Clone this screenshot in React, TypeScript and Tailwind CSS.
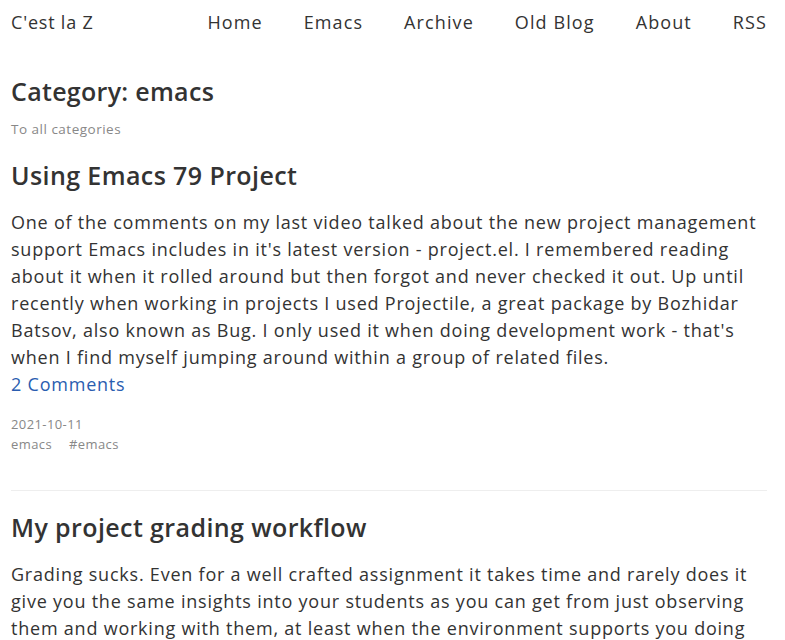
const posts = [
  {
    title: 'Using Emacs 79 Project',
    body: "One of the comments on my last video talked about the new project management support Emacs includes in it's latest version - project.el. I remembered reading about it when it rolled around but then forgot and never checked it out. Up until recently when working in projects I used Projectile, a great package by Bozhidar Batsov, also known as Bug. I only used it when doing development work - that's when I find myself jumping around within a group of related files.",
    comments: '2 Comments',
    date: '2021-10-11',
    tags: ['emacs', '#emacs'],
  },
  {
    title: 'My project grading workflow',
    body: 'Grading sucks. Even for a well crafted assignment it takes time and rarely does it give you the same insights into your students as you can get from just observing them and working with them, at least when the environment supports you doing that. Reviewing projects is a good place to start.',
    comments: '',
    date: '',
    tags: [],
  },
];

const navLinks = ['Home', 'Emacs', 'Archive', 'Old Blog', 'About', 'RSS'];

export default function App() {
  return (
    <div
      className="min-h-screen bg-white text-[#333333] pl-[11px] pr-[18px]"
      style={{ fontFamily: '"Open Sans", "Liberation Sans", sans-serif' }}
    >
      <header className="flex items-center justify-between h-[45px] text-[18px] tracking-[1.1px]">
        <a className="text-[#333333] tracking-[0.8px]">C'est la Z</a>
        <nav className="flex gap-[41px]">
          {navLinks.map((l) => (
            <a key={l} className="text-[#333333]">
              {l}
            </a>
          ))}
        </nav>
      </header>

      <main>
        <h1 className="text-[25px] font-semibold mt-[29px] leading-[34px] tracking-[0.3px]">Category: emacs</h1>
        <p className="text-[13.5px] text-[#888888] mt-[11px] tracking-[0.5px]">To all categories</p>

        {posts.map((p, i) => (
          <article key={p.title} className={i > 0 ? 'pt-[19px]' : 'pt-[19px]'}>
            <h2 className="text-[25px] font-semibold leading-[34px] tracking-[0.4px]">{p.title}</h2>
            <p className="text-[18px] leading-[27px] mt-[17px] tracking-[0.78px]">{p.body}</p>
            {p.comments && (
              <a className="block text-[18px] leading-[27px] text-[#2a5db0] tracking-[0.78px]">{p.comments}</a>
            )}
            {p.date && (
              <div className="mt-[16px] text-[13px] leading-[20px] text-[#888888] tracking-[0.4px]">
                <div>{p.date}</div>
                <div className="flex gap-[17px]">
                  {p.tags.map((t) => (
                    <span key={t}>{t}</span>
                  ))}
                </div>
              </div>
            )}
            {i === 0 && <hr className="mt-[36px] border-t border-[#eeeeee]" />}
          </article>
        ))}
      </main>
    </div>
  );
}
